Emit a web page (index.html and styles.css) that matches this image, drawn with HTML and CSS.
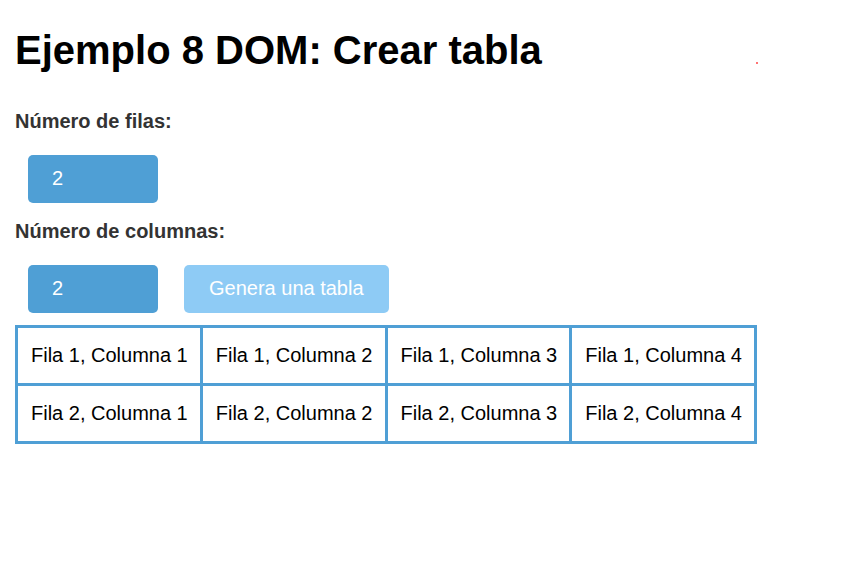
FILE: index.html
```html
<!DOCTYPE html>
<html lang="es">
<head>
<meta charset="utf-8">
<title>Ejemplo 8 DOM: Crear tabla</title>
<link rel="stylesheet" href="styles.css">
</head>
<body>
<span class="dot"></span>
<h1 class="title">Ejemplo 8 DOM: Crear tabla</h1>
<label class="field-label" for="filas">Número de filas:</label>
<div class="row row-first">
  <input class="num-input" id="filas" type="text" value="2">
</div>
<label class="field-label field-label-2" for="columnas">Número de columnas:</label>
<div class="row">
  <input class="num-input" id="columnas" type="text" value="2">
  <button class="gen-btn" type="button">Genera una tabla</button>
</div>
<table class="grid">
  <tr><td>Fila 1, Columna 1</td><td>Fila 1, Columna 2</td><td>Fila 1, Columna 3</td><td>Fila 1, Columna 4</td></tr>
  <tr><td>Fila 2, Columna 1</td><td>Fila 2, Columna 2</td><td>Fila 2, Columna 3</td><td>Fila 2, Columna 4</td></tr>
</table>
</body>
</html>
```
FILE: styles.css
```css
html, body {
  margin: 0;
  padding: 0;
  background: #fff;
}
body {
  padding: 0 15px;
  font-family: "Liberation Sans", Arial, sans-serif;
  font-size: 20px;
  color: #000;
  display: flex;
  flex-direction: column;
  align-items: flex-start;
  position: relative;
  min-height: 574px;
  box-sizing: border-box;
}
.dot {
  position: absolute;
  left: 756px;
  top: 62px;
  width: 2px;
  height: 2px;
  background: rgba(255, 0, 0, 0.55);
}
.title {
  font-size: 40px;
  font-weight: bold;
  line-height: 46px;
  margin: 27px 0 27px;
}
.field-label {
  display: block;
  font-weight: bold;
  color: #333;
  line-height: 23px;
  margin-top: 10px;
}
.field-label-2 {
  margin-top: 17px;
}
.row {
  display: flex;
  align-items: center;
  gap: 26px;
  margin-top: 22px;
  padding-left: 13px;
}
.num-input {
  box-sizing: border-box;
  width: 130px;
  height: 48px;
  padding: 12px 24px 13px;
  border: none;
  border-radius: 5px;
  background: #4f9fd5;
  color: #fff;
  font-family: inherit;
  font-size: 20px;
  line-height: 23px;
  margin: 0;
}
.gen-btn {
  box-sizing: border-box;
  height: 48px;
  padding: 12px 25px 13px;
  border: none;
  border-radius: 5px;
  background: #8ecbf5;
  color: #fff;
  font-family: inherit;
  font-size: 20px;
  line-height: 23px;
  margin: 0;
}
.grid {
  margin-top: 12px;
  border-collapse: collapse;
  border: 3px solid #4f9fd5;
}
.grid td {
  border: 3px solid #4f9fd5;
  padding: 16px 12px 16px 13px;
  line-height: 23px;
  white-space: nowrap;
}
```
